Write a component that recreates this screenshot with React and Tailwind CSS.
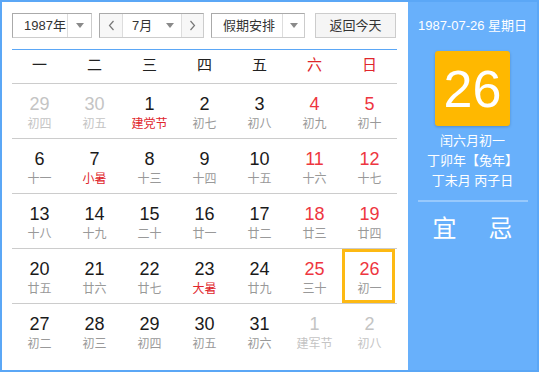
import React from "react";

const FONT = { fontFamily: '"Liberation Sans", Arial, "Noto Sans CJK SC", sans-serif' };

const weeks = [
  [
    ["29", "初四", "o"], ["30", "初五", "o"], ["1", "建党节", "lr"], ["2", "初七", ""], ["3", "初八", ""], ["4", "初九", "nr"], ["5", "初十", "nr"],
  ],
  [
    ["6", "十一", ""], ["7", "小暑", "lr"], ["8", "十三", ""], ["9", "十四", ""], ["10", "十五", ""], ["11", "十六", "nr"], ["12", "十七", "nr"],
  ],
  [
    ["13", "十八", ""], ["14", "十九", ""], ["15", "二十", ""], ["16", "廿一", ""], ["17", "廿二", ""], ["18", "廿三", "nr"], ["19", "廿四", "nr"],
  ],
  [
    ["20", "廿五", ""], ["21", "廿六", ""], ["22", "廿七", ""], ["23", "大暑", "lr"], ["24", "廿九", ""], ["25", "三十", "nr"], ["26", "初一", "sel"],
  ],
  [
    ["27", "初二", ""], ["28", "初三", ""], ["29", "初四", ""], ["30", "初五", ""], ["31", "初六", ""], ["1", "建军节", "o"], ["2", "初八", "o"],
  ],
];

function Tri() {
  return <span className="block w-0 h-0 border-x-[4px] border-x-transparent border-t-[5px] border-t-[#8a8a8a]" />;
}

function Chevron({ dir }) {
  return (
    <svg width="7" height="11" viewBox="0 0 7 11">
      <polyline
        points={dir === "l" ? "5.5,1 1.5,5.5 5.5,10" : "1.5,1 5.5,5.5 1.5,10"}
        fill="none"
        stroke="#777"
        strokeWidth="1.2"
      />
    </svg>
  );
}

function Cell({ d }) {
  const [n, l, t] = d;
  let numC = "text-[#1a1a1a]";
  let lunC = "text-[#999]";
  if (t === "o") {
    numC = "text-[#c4c4c4]";
    lunC = "text-[#c4c4c4]";
  } else if (t === "lr") {
    lunC = "text-[#e0262c]";
  } else if (t === "nr" || t === "sel") {
    numC = "text-[#ee3640]";
  }
  return (
    <div className="relative flex flex-col items-center pt-[10px]">
      {t === "sel" && (
        <div className="absolute left-0 top-0 w-[53px] h-[54px] border-[3px] border-[#fdb913]" />
      )}
      <div className={`text-[18px] leading-[20px] ${numC}`}>{n}</div>
      <div className={`text-[12px] leading-[20px] ${lunC}`}>{l}</div>
    </div>
  );
}

export default function App() {
  const heads = ["一", "二", "三", "四", "五", "六", "日"];
  return (
    <div style={FONT} className="w-[539px] h-[372px] flex border-2 border-[#5ba7f6] bg-white overflow-hidden">
      <div className="w-[406px] h-full bg-white pl-[10px] pt-[11px]">
        <div className="flex items-center h-[25px] text-[13px] text-[#333]">
          <div className="flex h-[25px] w-[80px] border border-[#aaa] border-r-[#ccc] border-b-[#ccc]">
            <div className="w-[54px] flex items-center pl-[11px]">1987年</div>
            <div className="flex-1 border-l border-[#ddd] flex items-center justify-center">
              <Tri />
            </div>
          </div>
          <div className="ml-[7px] flex h-[25px] w-[105px] border border-[#aaa] border-r-[#ccc] border-b-[#ccc]">
            <div className="w-[22px] bg-[#f7f7f7] flex items-center justify-center">
              <Chevron dir="l" />
            </div>
            <div className="w-[59px] border-l border-[#ddd] flex items-center pl-[9px] pr-[7px] justify-between">
              <span>7月</span>
              <Tri />
            </div>
            <div className="flex-1 border-l border-[#ddd] bg-[#f7f7f7] flex items-center justify-center">
              <Chevron dir="r" />
            </div>
          </div>
          <div className="ml-[7px] flex h-[25px] w-[94px] border border-[#aaa] border-r-[#ccc] border-b-[#ccc]">
            <div className="w-[70px] flex items-center pl-[11px]">假期安排</div>
            <div className="flex-1 border-l border-[#ddd] flex items-center justify-center">
              <Tri />
            </div>
          </div>
          <div className="ml-[10px] h-[25px] w-[81px] border border-[#ccc] bg-[#f5f5f5] flex items-center justify-center">
            返回今天
          </div>
        </div>
        <div className="mt-[11px] w-[385px] h-px bg-[#5ba7f6]" />
        <div className="w-[385px] grid grid-cols-7 h-[34px] border-b border-[#cccccc] text-[15px] pb-[2px]">
          {heads.map((h, i) => (
            <div key={h} className={`flex items-center justify-center ${i >= 5 ? "text-[#e0262c]" : "text-[#222]"}`}>
              {h}
            </div>
          ))}
        </div>
        {weeks.map((w, i) => (
          <div
            key={i}
            className={`w-[385px] grid grid-cols-7 h-[55px] ${i < 4 ? "border-b border-[#cccccc]" : ""}`}
          >
            {w.map((d, j) => (
              <Cell key={j} d={d} />
            ))}
          </div>
        ))}
      </div>
      <div className="flex-1 h-full bg-[#68b0fb] flex flex-col items-center text-white">
        <div className="mt-[14px] text-[13px] leading-[20px]">1987-07-26 星期日</div>
        <div className="mt-[15px] w-[75px] h-[75px] rounded-[3px] bg-[#ffb800] shadow-[0_1px_3px_rgba(0,0,0,0.2)] flex items-center justify-center text-[52px] leading-none">
          26
        </div>
        <div className="mt-[5px] flex flex-col items-center text-[13px] leading-[20px]">
          <div>闰六月初一</div>
          <div>丁卯年【兔年】</div>
          <div>丁未月 丙子日</div>
        </div>
        <div className="mt-[9px] w-[110px] h-[2px] bg-[#98c9fc]" />
        <div className="mt-[13px] flex gap-[32px] text-[24px] leading-[28px]">
          <span>宜</span>
          <span>忌</span>
        </div>
      </div>
    </div>
  );
}
